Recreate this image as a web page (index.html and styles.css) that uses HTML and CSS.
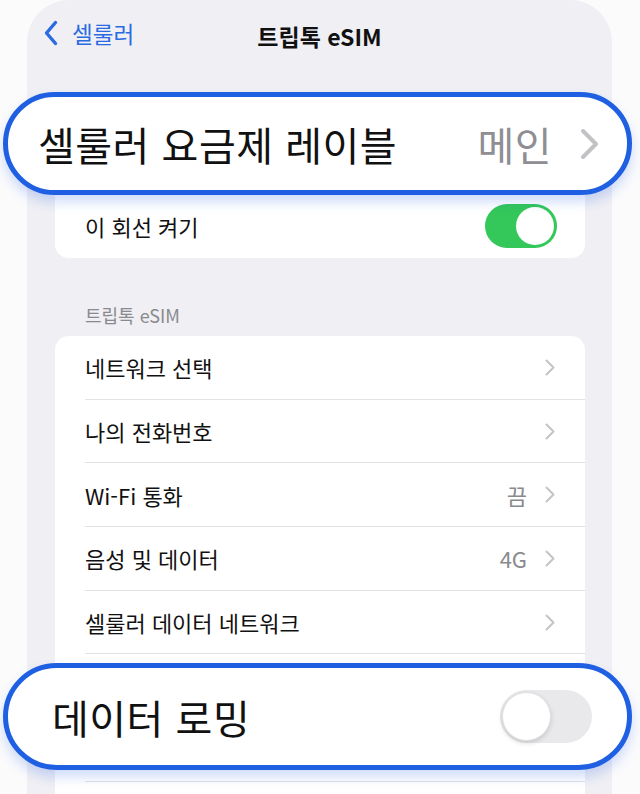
FILE: index.html
```html
<!DOCTYPE html>
<html lang="ko">
<head>
    <meta charset="UTF-8">
    <meta name="viewport" content="width=device-width, initial-scale=1.0">
    <title>트립톡 eSIM</title>
    <link rel="stylesheet" href="styles.css">
</head>
<body>
    <div class="screen">
        <div class="phone">
            <div class="nav">
                <a class="back" href="#">
                    <svg width="14" height="26" viewBox="0 0 14 26"><path d="M11.5 2.5 L2.5 13 L11.5 23.5" fill="none" stroke="#2a6ae3" stroke-width="3.4" stroke-linecap="round" stroke-linejoin="round"/></svg>
                    <span>셀룰러</span>
                </a>
                <div class="title">트립톡 eSIM</div>
            </div>

            <div class="group">
                <!-- covered by the callout below -->
                <div class="row covered">
                    <div class="row-body"></div>
                </div>
                <div class="row">
                    <div class="row-body last">
                        <span class="label">이 회선 켜기</span>
                        <span class="switch on"><span class="knob"></span></span>
                    </div>
                </div>
            </div>

            <div class="group-title">트립톡 eSIM</div>

            <div class="group">
                <div class="row">
                    <div class="row-body">
                        <span class="label">네트워크 선택</span>
                        <svg class="chev" width="10" height="17" viewBox="0 0 10 17"><path d="M1.5 1.5 L8.5 8.5 L1.5 15.5" fill="none" stroke="#c4c4c8" stroke-width="2" stroke-linecap="round" stroke-linejoin="round"/></svg>
                    </div>
                </div>
                <div class="row">
                    <div class="row-body">
                        <span class="label">나의 전화번호</span>
                        <svg class="chev" width="10" height="17" viewBox="0 0 10 17"><path d="M1.5 1.5 L8.5 8.5 L1.5 15.5" fill="none" stroke="#c4c4c8" stroke-width="2" stroke-linecap="round" stroke-linejoin="round"/></svg>
                    </div>
                </div>
                <div class="row">
                    <div class="row-body">
                        <span class="label">Wi-Fi 통화</span>
                        <span class="value">끔</span>
                        <svg class="chev" width="10" height="17" viewBox="0 0 10 17"><path d="M1.5 1.5 L8.5 8.5 L1.5 15.5" fill="none" stroke="#c4c4c8" stroke-width="2" stroke-linecap="round" stroke-linejoin="round"/></svg>
                    </div>
                </div>
                <div class="row">
                    <div class="row-body">
                        <span class="label">음성 및 데이터</span>
                        <span class="value">4G</span>
                        <svg class="chev" width="10" height="17" viewBox="0 0 10 17"><path d="M1.5 1.5 L8.5 8.5 L1.5 15.5" fill="none" stroke="#c4c4c8" stroke-width="2" stroke-linecap="round" stroke-linejoin="round"/></svg>
                    </div>
                </div>
                <div class="row">
                    <div class="row-body">
                        <span class="label">셀룰러 데이터 네트워크</span>
                        <svg class="chev" width="10" height="17" viewBox="0 0 10 17"><path d="M1.5 1.5 L8.5 8.5 L1.5 15.5" fill="none" stroke="#c4c4c8" stroke-width="2" stroke-linecap="round" stroke-linejoin="round"/></svg>
                    </div>
                </div>
                <!-- covered by the roaming callout -->
                <div class="row covered">
                    <div class="row-body"></div>
                </div>
                <div class="row covered">
                    <div class="row-body"></div>
                </div>
                <div class="row">
                    <div class="row-body last"></div>
                </div>
            </div>
        </div>

        <!-- magnified callouts -->
        <div class="callout callout-plan">
            <span class="label">셀룰러 요금제 레이블</span>
            <span class="value">메인</span>
            <svg class="chev" width="20" height="32" viewBox="0 0 20 32"><path d="M3 3 L16 16 L3 29" fill="none" stroke="#c2c2c6" stroke-width="4" stroke-linecap="round" stroke-linejoin="round"/></svg>
        </div>

        <div class="callout callout-roaming">
            <span class="label">데이터 로밍</span>
            <span class="switch big"><span class="knob"></span></span>
        </div>
    </div>
</body>
</html>
```

FILE: styles.css
```css
* {
    margin: 0;
    padding: 0;
    box-sizing: border-box;
}

html, body {
    height: 794px;
    overflow: hidden;
}

body {
    font-family: "Noto Sans CJK KR", "Noto Sans", sans-serif;
    background: #fbfbfc;
    color: #111;
}

.screen {
    position: relative;
    height: 794px;
}

.phone {
    margin-left: 27px;
    width: 585px;
    height: 794px;
    background: #efeff4;
    border-radius: 42px 42px 0 0;
    overflow: hidden;
}

.nav {
    display: grid;
    grid-template-columns: 1fr auto 1fr;
    align-items: center;
    height: 70px;
    padding: 0 17px;
}

.back {
    display: flex;
    align-items: center;
    gap: 14px;
    color: #2a6ae3;
    text-decoration: none;
    font-size: 22.5px;
    margin-top: -4px;
}

.title {
    font-size: 23px;
    font-weight: bold;
    margin-top: 2px;
}

.group {
    margin: 0 27px 0 28px;
    background: white;
    border-radius: 14px;
    overflow: hidden;
}

.nav + .group {
    margin-top: 60.6px;
}

.row {
    padding-left: 30px;
}

.row-body {
    display: flex;
    align-items: center;
    height: 63.7px;
    padding-right: 30px;
    border-bottom: 1px solid #e2e2e6;
}

.row-body.last {
    border-bottom: none;
    padding-right: 28px;
}

.label {
    flex: 1;
    font-size: 22px;
}

.value {
    font-size: 22px;
    color: #8a8a8e;
    margin-right: 18px;
}

.group-title {
    padding: 47px 0 10px 58px;
    font-size: 18px;
    line-height: 21px;
    color: #8a8a8e;
}

.switch {
    position: relative;
    width: 72px;
    height: 44px;
    border-radius: 22px;
    background: #e9e9eb;
}

.switch .knob {
    position: absolute;
    top: 3px;
    left: 3px;
    width: 38px;
    height: 38px;
    border-radius: 50%;
    background: white;
    box-shadow: 0 2px 4px rgba(0,0,0,0.15);
}

.switch.on {
    background: #34c759;
}

.switch.on .knob {
    left: auto;
    right: 3px;
    box-shadow: none;
}

.callout {
    position: absolute;
    left: 3px;
    width: 629px;
    display: flex;
    align-items: center;
    background: white;
    border: 5px solid #1f5fe2;
    border-radius: 60px;
    box-shadow: 0 7px 12px rgba(40,100,230,0.22);
}

.callout-plan {
    top: 92px;
    height: 103px;
    padding: 0 27px 0 30px;
}

.callout-plan .label,
.callout-plan .value {
    font-size: 40px;
    letter-spacing: 0.5px;
}

.callout-plan .value {
    color: #8e8e93;
    margin-right: 28px;
}

.callout-roaming {
    top: 663px;
    height: 107px;
    padding: 0 35px 0 44px;
}

.callout-roaming .label {
    font-size: 40px;
    letter-spacing: 0.5px;
}

.switch.big {
    width: 92px;
    height: 53px;
    border-radius: 27px;
}

.switch.big .knob {
    top: 2px;
    left: 2px;
    width: 49px;
    height: 49px;
    border: 1px solid #e0e0e0;
    box-shadow: 0 2px 5px rgba(0,0,0,0.15);
}
```
